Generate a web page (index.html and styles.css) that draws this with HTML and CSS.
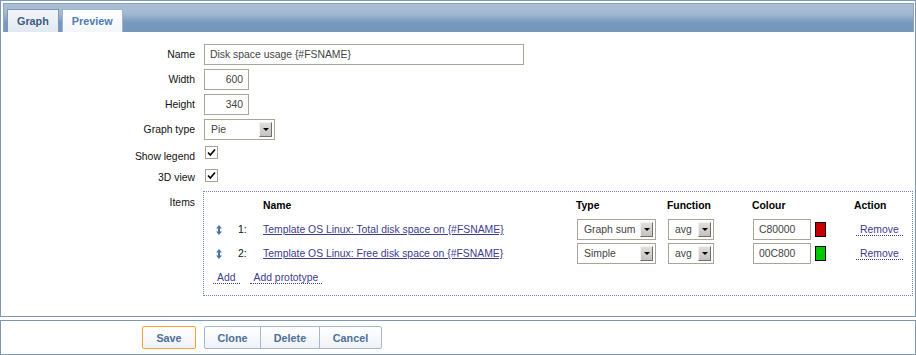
FILE: index.html
```html
<!DOCTYPE html>
<html lang="en">
<head>
    <meta charset="UTF-8">
    <title>Graph</title>
    <link rel="stylesheet" href="styles.css">
</head>
<body>

    <!-- graph form -->
    <div class="panel">
        <div class="tabs">
            <span class="tab active">Graph</span>
            <span class="tab">Preview</span>
        </div>

        <div class="form">
            <div class="row">
                <label>Name</label>
                <input class="text name-input" type="text" value="Disk space usage {#FSNAME}">
            </div>
            <div class="row">
                <label>Width</label>
                <input class="text num-input" type="text" value="600">
            </div>
            <div class="row">
                <label>Height</label>
                <input class="text num-input" type="text" value="340">
            </div>
            <div class="row">
                <label>Graph type</label>
                <div class="select type-select"><span>Pie</span><span class="arrow"></span></div>
            </div>
            <div class="row check-row">
                <label>Show legend</label>
                <span class="checkbox"><svg width="11" height="11" viewBox="0 0 11 11"><path d="M2 5.5 L4.3 8 L9 2.5" fill="none" stroke="#000" stroke-width="1.6"/></svg></span>
            </div>
            <div class="row check-row view-row">
                <label>3D view</label>
                <span class="checkbox"><svg width="11" height="11" viewBox="0 0 11 11"><path d="M2 5.5 L4.3 8 L9 2.5" fill="none" stroke="#000" stroke-width="1.6"/></svg></span>
            </div>
            <div class="row items-row">
                <label>Items</label>
                <div class="items">
                    <div class="item-row item-head">
                        <span></span><span></span>
                        <span>Name</span>
                        <span>Type</span>
                        <span>Function</span>
                        <span>Colour</span>
                        <span>Action</span>
                    </div>

                    <div class="item-row">
                        <span class="drag"><svg width="6" height="10" viewBox="0 0 6 10"><path d="M3 0 L6 3.5 L4 3.5 L4 6.5 L6 6.5 L3 10 L0 6.5 L2 6.5 L2 3.5 L0 3.5 Z" fill="#4a78a8"/></svg></span>
                        <span class="num">1:</span>
                        <a href="#" class="item-link">Template OS Linux: Total disk space on {#FSNAME}</a>
                        <div class="select sel-type"><span>Graph sum</span><span class="arrow"></span></div>
                        <div class="select sel-func"><span>avg</span><span class="arrow"></span></div>
                        <div class="colour"><input class="text colour-input" type="text" value="C80000"><span class="swatch red"></span></div>
                        <span><a href="#" class="dotted remove">Remove</a></span>
                    </div>

                    <div class="item-row">
                        <span class="drag"><svg width="6" height="10" viewBox="0 0 6 10"><path d="M3 0 L6 3.5 L4 3.5 L4 6.5 L6 6.5 L3 10 L0 6.5 L2 6.5 L2 3.5 L0 3.5 Z" fill="#4a78a8"/></svg></span>
                        <span class="num">2:</span>
                        <a href="#" class="item-link">Template OS Linux: Free disk space on {#FSNAME}</a>
                        <div class="select sel-type"><span>Simple</span><span class="arrow"></span></div>
                        <div class="select sel-func"><span>avg</span><span class="arrow"></span></div>
                        <div class="colour"><input class="text colour-input" type="text" value="00C800"><span class="swatch green"></span></div>
                        <span><a href="#" class="dotted remove">Remove</a></span>
                    </div>

                    <div class="add-links">
                        <a href="#" class="dotted">Add</a>
                        <a href="#" class="dotted">Add prototype</a>
                    </div>
                </div>
            </div>
        </div>
    </div>

    <!-- buttons -->
    <div class="footer">
        <button class="btn save">Save</button>
        <div class="btn-group">
            <button class="btn">Clone</button>
            <button class="btn">Delete</button>
            <button class="btn">Cancel</button>
        </div>
    </div>

</body>
</html>
```

FILE: styles.css
```css
body {
    margin: 0;
    font-family: "Liberation Sans", Arial, sans-serif;
    font-size: 10.4px;
    color: #1a1a1a;
    background: #fff;
}
.panel {
    border: 1px solid #7e97b6;
    height: 315px;
}
.tabs {
    margin: 2px 1px 0 2px;
    height: 28px;
    border: 1px solid #8aa3c0;
    border-bottom: none;
    background: linear-gradient(#aabfd6, #a3b9d1 35%, #7899be 65%, #7597bc);
    display: flex;
    align-items: flex-end;
    padding-left: 3px;
    gap: 3px;
}
.tab {
    height: 22px;
    line-height: 22px;
    padding: 0 9px;
    font-weight: bold;
    font-size: 10.8px;
    border: 1px solid #9fb5ce;
    border-bottom: none;
    background: linear-gradient(#ffffff, #f3f6fa);
    color: #4f7cb1;
}
.tab.active {
    background: linear-gradient(#f2f5f9, #e2e9f1);
    color: #3d5a80;
    border-color: #7e97b6;
}
.form {
    padding-top: 12px;
    margin-right: 2px;
}
.row {
    display: flex;
    align-items: center;
    height: 21px;
    margin-bottom: 4px;
}
.row label {
    width: 194px;
    text-align: right;
    margin-right: 9px;
    color: #111;
}
input.text {
    box-sizing: border-box;
    height: 21px;
    border: 1px solid #aaa697;
    font-family: inherit;
    font-size: inherit;
    color: #444;
    padding: 0 5px;
    margin: 0;
    outline: none;
    background: #fff;
}
.name-input {
    width: 320px;
}
.num-input {
    width: 45px;
    text-align: right;
}
.select {
    box-sizing: border-box;
    height: 21px;
    border: 1px solid #aaa697;
    display: flex;
    align-items: center;
    justify-content: space-between;
    padding: 0 2px 0 6px;
    color: #444;
    background: #fff;
}
.arrow {
    width: 11px;
    height: 13px;
    border: 1px solid;
    border-color: #f2f2f2 #6e6e6e #6e6e6e #f2f2f2;
    background: linear-gradient(#e0dfdb, #c4c3bf);
    position: relative;
}
.arrow::after {
    content: "";
    position: absolute;
    left: 3px;
    top: 5px;
    border-left: 3px solid transparent;
    border-right: 3px solid transparent;
    border-top: 3px solid #000;
}
.type-select {
    width: 71px;
}
.check-row {
    height: 24px;
    margin-bottom: 0;
}
.view-row {
    height: 18px;
    margin-bottom: 5px;
}
.checkbox {
    box-sizing: border-box;
    width: 13px;
    height: 13px;
    border: 1px solid #a4a39c;
    background: #fff;
    align-self: flex-start;
    margin-top: 2px;
    margin-left: 1px;
    display: flex;
    align-items: center;
    justify-content: center;
}
.view-row .checkbox {
    margin-top: 1px;
}
.items-row {
    height: auto;
    align-items: flex-start;
}
.items-row label {
    padding-top: 6px;
}
.items {
    flex: 1;
    margin-left: -1px;
    border: 1px dotted #6f8ab0;
    padding: 6px 0 11px 8px;
}
.item-row {
    display: grid;
    grid-template-columns: 24px 27px 313px 91px 85px 102px 1fr;
    align-items: center;
    height: 21px;
    margin-bottom: 3px;
}
.item-head {
    height: 14px;
    font-weight: bold;
    color: #000;
    margin-bottom: 7px;
}
.drag {
    padding-left: 4px;
    display: flex;
}
.num {
    padding-left: 2px;
    color: #111;
}
.item-link {
    color: #3d3b8e;
    justify-self: start;
}
.sel-type {
    width: 79px;
    margin-left: 1px;
}
.sel-func {
    width: 46px;
    margin-left: 1px;
}
.colour {
    display: flex;
    align-items: center;
    margin-left: 1px;
}
.colour-input {
    width: 58px;
}
.swatch {
    box-sizing: border-box;
    width: 11px;
    height: 15px;
    border: 1px solid #000;
    margin-left: 4px;
}
.swatch.red {
    background: #c80000;
}
.swatch.green {
    background: #00c800;
}
.dotted {
    color: #3d3b8e;
    text-decoration: none;
    border-bottom: 1px dotted #3d3b8e;
    padding: 0 4px;
}
.remove {
    margin-left: 2px;
}
.add-links {
    margin-top: 8px;
    display: flex;
    gap: 10px;
    padding-left: 1px;
}
.footer {
    margin-top: 3px;
    border: 1px solid #7e97b6;
    height: 33px;
    display: flex;
    align-items: center;
    padding-left: 141px;
}
.btn {
    height: 23px;
    padding: 0 12px;
    font-family: inherit;
    font-size: 10.8px;
    font-weight: bold;
    color: #4f6f96;
    background: linear-gradient(#ffffff, #eef2f7);
    border: 1px solid #a5b7cd;
    border-radius: 2px;
    cursor: pointer;
}
.btn.save {
    width: 54px;
    border-color: #f7a334;
}
.btn-group {
    display: flex;
    margin-left: 9px;
}
.btn-group .btn {
    border-radius: 0;
    margin-left: -1px;
}
.btn-group .btn:first-child {
    border-radius: 2px 0 0 2px;
    width: 57px;
}
.btn-group .btn:nth-child(2) {
    width: 60px;
}
.btn-group .btn:last-child {
    border-radius: 0 2px 2px 0;
    width: 63px;
}
```
